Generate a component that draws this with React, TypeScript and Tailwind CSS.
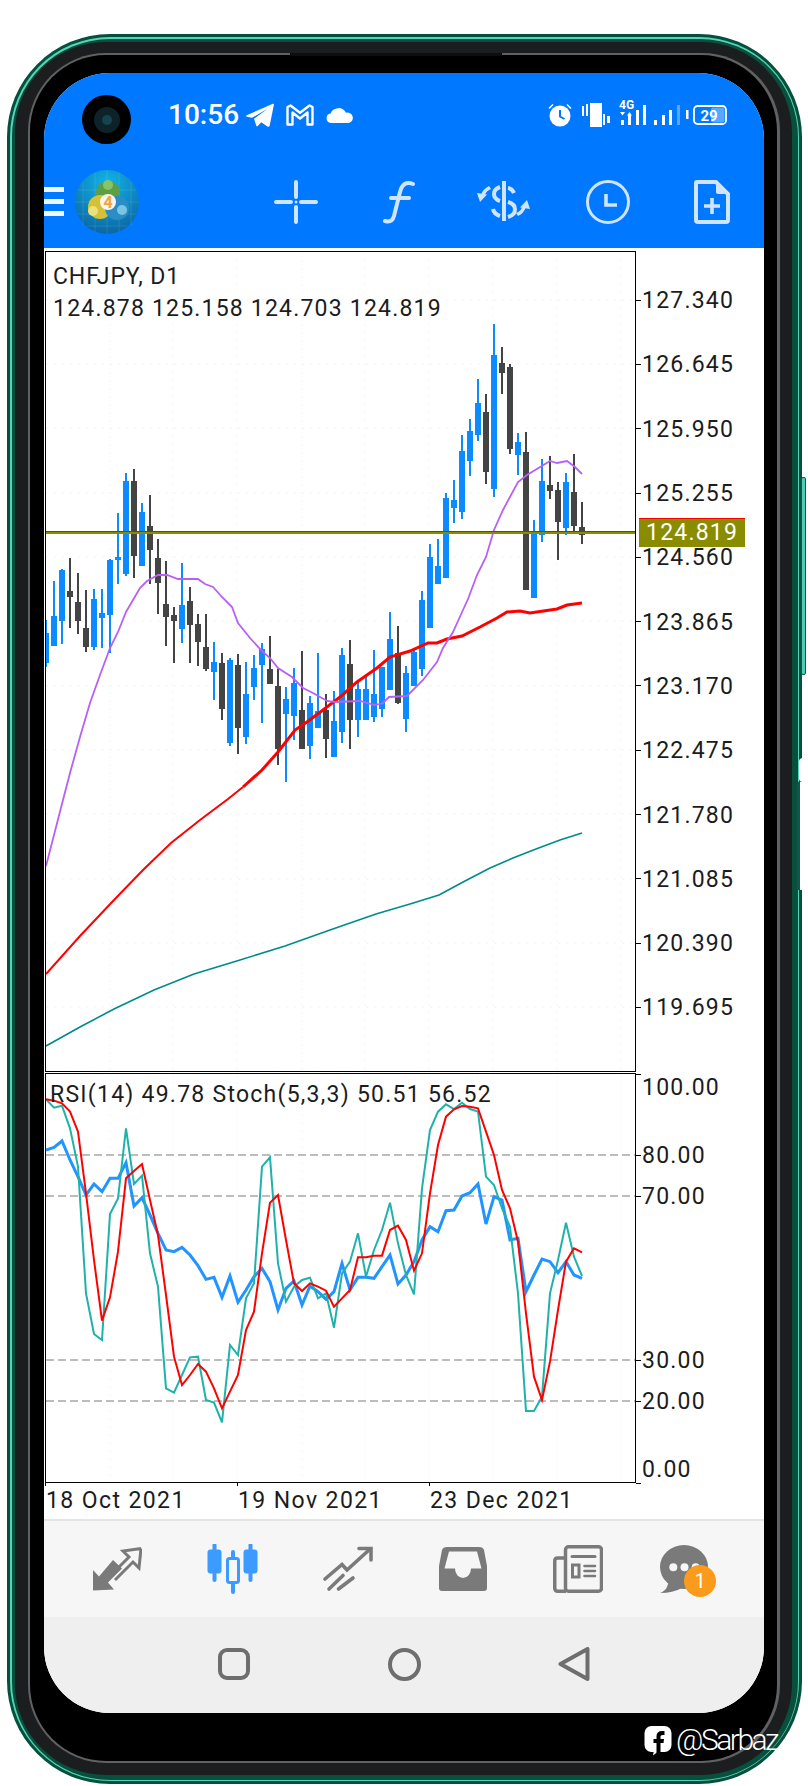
import { ReactNode } from "react";

// candles: high, low, body top, body bottom, up. x is 46 + 8 * index
const candles: number[][] = [
  [620, 667, 633, 663, 1], [581, 646, 616, 646, 1], [569, 644, 570, 621, 1], [558, 628, 591, 597, 0],
  [573, 634, 602, 621, 0], [590, 652, 628, 647, 0], [589, 650, 599, 647, 1], [589, 648, 613, 618, 1],
  [559, 653, 560, 615, 1], [513, 584, 557, 560, 1], [473, 576, 481, 574, 1], [469, 578, 481, 556, 0],
  [503, 566, 512, 566, 1], [495, 584, 526, 550, 0], [539, 614, 558, 583, 0], [561, 646, 604, 617, 0],
  [607, 663, 615, 621, 0], [563, 643, 605, 629, 1], [587, 663, 601, 625, 0], [614, 666, 624, 642, 0],
  [614, 671, 647, 669, 0], [642, 700, 662, 672, 1], [653, 720, 663, 709, 0], [658, 746, 660, 743, 1],
  [654, 754, 665, 728, 0], [662, 744, 694, 737, 1], [655, 700, 668, 687, 1], [643, 723, 649, 665, 1],
  [636, 684, 669, 684, 0], [669, 765, 686, 749, 0], [687, 782, 699, 714, 1], [668, 740, 683, 716, 1],
  [651, 749, 710, 749, 0], [696, 759, 703, 746, 1], [653, 728, 711, 728, 1], [694, 758, 710, 739, 0],
  [691, 757, 721, 757, 1], [648, 743, 655, 732, 1], [640, 749, 664, 720, 0], [680, 737, 689, 720, 1],
  [677, 720, 689, 720, 1], [650, 722, 694, 717, 1], [667, 717, 667, 709, 1], [612, 690, 639, 690, 1],
  [626, 704, 653, 703, 0], [666, 732, 673, 719, 1], [648, 686, 652, 686, 1], [591, 676, 600, 669, 1],
  [544, 628, 557, 628, 1], [539, 584, 566, 584, 1], [493, 578, 498, 578, 1], [480, 523, 500, 508, 1],
  [435, 519, 451, 512, 1], [419, 476, 431, 461, 1], [379, 441, 403, 435, 1], [394, 484, 412, 472, 0],
  [324, 497, 355, 489, 1], [347, 394, 363, 373, 0], [364, 454, 367, 449, 0], [433, 475, 442, 455, 1],
  [432, 590, 452, 590, 0], [520, 598, 532, 598, 1], [459, 542, 481, 535, 1], [456, 499, 485, 491, 0],
  [482, 560, 490, 522, 0], [473, 535, 482, 528, 1], [454, 531, 492, 526, 0], [502, 544, 527, 535, 0],
];

const purple = "46,866 63,800 70,773 80,737 90,703 100,675 110,648 118,632 126,612 140,588 147,581 158,575 167,575 178,579 198,579 205,584 213,587 222,597 232,607 238,623 250,638 262,651 270,658 278,668 292,677 303,688 313,693 327,701 335,702 360,701 375,705 383,703 389,697 407,696 423,680 437,662 443,648 453,632 463,610 468,599 477,575 486,557 494,530 503,510 518,482 527,475 550,461 557,463 567,461 575,467 582,474";
const redMaLeft = "46,974 80,936 114,900 143,870 171,843 200,820 228,799 243,787";
const redMa = "243,787 262,770 278,752 295,730 307,722 323,710 340,697 357,682 377,668 390,657 410,651 428,643 437,643 447,639 462,636 480,627 497,618 507,612 520,611 530,613 557,609 567,605 582,603";
const tealMa = "46,1046 80,1027 114,1009 154,990 194,974 240,960 285,946 330,930 376,914 410,904 439,895 465,881 490,868 513,858 536,849 560,840 582,833";

// rsi / stoch values read off the chart, 3x scale from y 1060
const rsi = [270, 262, 243, 300, 350, 405, 372, 395, 355, 355, 308, 438, 413, 465, 520, 570, 575, 562, 585, 617, 658, 652, 712, 648, 727, 690, 650, 625, 665, 750, 685, 663, 735, 678, 695, 718, 695, 610, 690, 652, 652, 655, 620, 585, 672, 645, 605, 540, 500, 515, 452, 450, 408, 398, 372, 492, 410, 420, 540, 535, 695, 645, 597, 605, 638, 605, 645, 655];
const stochMain = [118, 143, 137, 205, 320, 700, 822, 840, 462, 415, 205, 372, 347, 580, 680, 985, 998, 945, 892, 890, 1020, 1028, 1087, 855, 885, 715, 670, 320, 292, 610, 725, 680, 660, 653, 715, 700, 803, 640, 605, 520, 650, 570, 510, 428, 550, 645, 703, 385, 210, 155, 133, 147, 128, 147, 155, 350, 375, 445, 500, 700, 1053, 1053, 1010, 700, 600, 488, 590, 648];
const stochSignal = [118, 122, 130, 155, 215, 400, 600, 782, 712, 575, 355, 333, 312, 420, 525, 705, 890, 975, 945, 912, 935, 985, 1045, 995, 945, 810, 755, 580, 428, 405, 540, 670, 693, 670, 680, 692, 740, 715, 690, 592, 592, 587, 587, 510, 497, 540, 632, 580, 400, 255, 170, 148, 138, 140, 145, 215, 285, 390, 445, 545, 760, 950, 1020, 905, 750, 605, 565, 577];

const toPoints = (vals: number[]) => vals.map((v, i) => `${46 + 8 * i},${1060 + v / 3}`).join(" ");

const prices = ["127.340", "126.645", "125.950", "125.255", "124.560", "123.865", "123.170", "122.475", "121.780", "121.085", "120.390", "119.695"];
const gridX = [110, 173, 237, 302, 365, 429, 493, 557, 621];
const gridY = [300, 364, 428, 493, 557, 621, 686, 750, 814, 879, 943, 1007];

function PriceChart() {
  return (
    <svg viewBox="46 252 589 819" className="block w-[589px] h-[819px]">
      <g stroke="#f2f2f2" strokeDasharray="2 6">
        {gridX.map((x) => <line key={x} x1={x} x2={x} y1={252} y2={1071} />)}
        {gridY.map((y) => <line key={y} x1={46} x2={635} y1={y} y2={y} />)}
      </g>
      <g shapeRendering="crispEdges">
        {candles.map((c, i) => {
          const x = 46 + 8 * i;
          const fill = c[4] ? "#0c8bff" : "#444444";
          return (
            <g key={i} fill={fill}>
              <rect x={x - 1} y={c[0]} width={2} height={c[1] - c[0]} />
              <rect x={x - 3} y={c[2]} width={6} height={Math.max(c[3] - c[2], 3)} />
            </g>
          );
        })}
      </g>
      <polyline points={tealMa} fill="none" stroke="#008b8b" strokeWidth={1.6} />
      <polyline points={redMaLeft} fill="none" stroke="#ff0000" strokeWidth={2} />
      <polyline points={redMa} fill="none" stroke="#ff0000" strokeWidth={3} />
      <polyline points={purple} fill="none" stroke="#b860f6" strokeWidth={1.8} />
      <rect x={46} y={531} width={590} height={1} fill="#ff0000" shapeRendering="crispEdges" />
      <rect x={46} y={532} width={590} height={2} fill="#8a8c00" shapeRendering="crispEdges" />
    </svg>
  );
}

function RsiChart() {
  return (
    <svg viewBox="46 1074 589 408" className="block w-[589px] h-[408px]">
      <g stroke="#f4f4f4" strokeDasharray="2 6">
        {gridX.map((x) => <line key={x} x1={x} x2={x} y1={1074} y2={1482} />)}
      </g>
      <g stroke="#bdbdbd" strokeWidth={2} strokeDasharray="8 4">
        {[1155, 1196, 1360, 1401].map((y) => <line key={y} x1={46} x2={635} y1={y} y2={y} />)}
      </g>
      <polyline points={toPoints(rsi)} fill="none" stroke="#2094ff" strokeWidth={3} />
      <polyline points={toPoints(stochMain)} fill="none" stroke="#20b2aa" strokeWidth={2} />
      <polyline points={toPoints(stochSignal)} fill="none" stroke="#ff0000" strokeWidth={2} />
    </svg>
  );
}

function Logo() {
  return (
    <svg viewBox="0 0 64 64" className="w-16 h-16">
      <defs>
        <radialGradient id="mt" cx="50%" cy="20%" r="85%">
          <stop offset="0%" stopColor="#12b4e8" />
          <stop offset="100%" stopColor="#0a62a0" />
        </radialGradient>
      </defs>
      <circle cx="32" cy="32" r="32" fill="url(#mt)" />
      <g stroke="#ffffff" strokeOpacity="0.1">
        <path d="M8 12V56M20 3V62M32 0V64M44 3V62M56 12V56M3 20H61M0 32H64M3 44H61M12 56H52" />
      </g>
      <circle cx="33" cy="23" r="12" fill="#5f9f44" />
      <circle cx="33" cy="15" r="5" fill="#86c46a" />
      <circle cx="25" cy="37" r="12" fill="#d4c136" />
      <circle cx="18" cy="41" r="5" fill="#ece07c" />
      <circle cx="42" cy="38" r="12" fill="#2a8dc6" />
      <circle cx="47" cy="40" r="5" fill="#7cc4e6" />
      <circle cx="33" cy="32" r="8" fill="#f7f5ee" />
      <text x="33" y="38" textAnchor="middle" fontSize="16" fontWeight="700" fill="#f2a33c" fontFamily="Roboto, sans-serif">4</text>
    </svg>
  );
}

function Crosshair() {
  return (
    <svg viewBox="0 0 44 44" className="w-11 h-11" stroke="#cfe4ff" strokeWidth="4" strokeLinecap="round">
      <path d="M2 22H17M27 22H42M22 2V17M22 27V42" />
      <circle cx="22" cy="22" r="1.5" fill="#cfe4ff" stroke="none" />
    </svg>
  );
}

function FuncIcon() {
  return (
    <svg viewBox="0 0 34 44" className="w-[34px] h-11" fill="none" stroke="#cfe4ff" strokeWidth="4" strokeLinecap="round">
      <path d="M30 4Q20 0 17 12L11 36Q9 43 2 41" />
      <path d="M8 18H26" />
    </svg>
  );
}

function DollarArrows() {
  return (
    <svg viewBox="0 0 54 44" className="w-[54px] h-11" fill="none" stroke="#cfe4ff" strokeWidth="4">
      <path d="M27 1V41" />
      <path d="M23 7Q17 9 17 14Q17 19 23 21" />
      <path d="M31 8Q35 8.500 37 13" />
      <path d="M31 22Q38 24 38 29.500Q38 35 31 37" />
      <path d="M16 29Q17 34 23 36" />
      <g fill="#cfe4ff" stroke="none">
        <path d="M12 6Q6 9 4.500 14L8 15Q9 11 14 9Z" />
        <path d="M0 13L10 14.500L3 22Z" />
      </g>
      <g fill="#cfe4ff" stroke="none" transform="rotate(180 26.500 21)">
        <path d="M12 6Q6 9 4.500 14L8 15Q9 11 14 9Z" />
        <path d="M0 13L10 14.500L3 22Z" />
      </g>
    </svg>
  );
}

function ClockIcon() {
  return (
    <svg viewBox="0 0 44 44" className="w-11 h-11" fill="none" stroke="#cfe4ff">
      <circle cx="22" cy="22" r="20.500" strokeWidth="3" />
      <path d="M20 14V25H31" strokeWidth="3.600" />
    </svg>
  );
}

function NewOrderIcon() {
  return (
    <svg viewBox="0 0 36 44" className="w-9 h-11" fill="none" stroke="#cfe4ff">
      <path d="M3 2H22L34 14V40Q34 42 32 42H4Q2 42 2 40V3Q2 2 3 2Z" strokeWidth="4" />
      <path d="M22 0L36 14H24Q22 14 22 12Z" fill="#cfe4ff" stroke="none" />
      <path d="M10 26H26M18 18V34" strokeWidth="3.600" />
    </svg>
  );
}

function NetworkIcons() {
  return (
    <svg viewBox="0 -2 80 30" className="w-20 h-[30px]" fill="#ffffff">
      <text x="0" y="9" fontSize="12" fontWeight="700" fontFamily="Roboto, sans-serif" fill="#ffffff">4G</text>
      <path d="M1 12H6L3.500 15.500ZM8 15.500H13L10.500 12Z" />
      <rect x="2" y="20" width="3" height="5" />
      <rect x="9" y="15" width="3" height="10" />
      <rect x="17" y="10" width="3" height="15" />
      <rect x="24" y="5" width="3" height="20" />
      <rect x="35" y="20" width="3" height="5" />
      <rect x="43" y="15" width="3" height="10" />
      <rect x="50" y="10" width="3" height="15" />
      <rect x="58" y="5" width="3" height="20" fillOpacity="0.35" />
      <rect x="67" y="10" width="2.500" height="9" />
    </svg>
  );
}

function Battery() {
  return (
    <svg viewBox="0 0 34 20" className="w-[34px] h-5">
      <rect x="1" y="1" width="32" height="18" rx="3.500" fill="none" stroke="#ffffff" strokeWidth="1.800" />
      <rect x="18" y="2.500" width="13.500" height="15" rx="2" fill="#ffffff" fillOpacity="0.35" />
      <text x="16" y="15.500" textAnchor="middle" fontSize="15" fontWeight="700" fill="#ffffff" fontFamily="Roboto, sans-serif">29</text>
    </svg>
  );
}

function ExchangeIcon() {
  return (
    <svg viewBox="0 0 49 44" className="w-[49px] h-11" fill="none" stroke="#7a7a7a">
      <path d="M0 43.500V23L6 29.500L20 13L29 21.500L15 35.500L21 42.500Z" fill="#7a7a7a" stroke="none" />
      <path d="M48 1.500L30 4L36 10L26 20M48 1.500L46 21L40 15L22 33" strokeWidth="3" />
    </svg>
  );
}

function CandlesIcon() {
  return (
    <svg viewBox="0 0 51 50" className="w-[51px] h-[50px]" fill="#3d9bff" stroke="#3d9bff">
      <rect x="1" y="6" width="13" height="23" rx="2" />
      <path d="M7.500 1V36" strokeWidth="4" strokeLinecap="round" />
      <rect x="20.500" y="14.500" width="11" height="24" rx="2" fill="none" strokeWidth="3" />
      <path d="M26 8V14M26 39V48" strokeWidth="4" strokeLinecap="round" />
      <rect x="37" y="6" width="13" height="23" rx="2" />
      <path d="M43.500 1V36" strokeWidth="4" strokeLinecap="round" />
    </svg>
  );
}

function TrendIcon() {
  return (
    <svg viewBox="0 0 50 46" className="w-[50px] h-[46px]" fill="none" stroke="#7a7a7a" strokeWidth="3.600" strokeLinecap="round">
      <path d="M2 33L19 18.500L24 24L46 4" />
      <path d="M36 2.500H48V14" />
      <path d="M6 43L20 29.500M15.500 43L30 32" />
    </svg>
  );
}

function InboxIcon() {
  return (
    <svg viewBox="0 0 48 44" className="w-12 h-11">
      <path
        fill="#7a7a7a"
        fillRule="evenodd"
        d="M8 0H40Q44 0 45 3L48 19V41Q48 44 45 44H3Q0 44 0 41V19L3 3Q4 0 8 0ZM10 4.500H38L42.500 21.500H32A8 9.500 0 0 1 16 21.500H5.500Z"
      />
    </svg>
  );
}

function NewsIcon() {
  return (
    <svg viewBox="0 0 50 48" className="w-[50px] h-12" fill="none" stroke="#7a7a7a">
      <rect x="12.500" y="1.750" width="36" height="44.500" rx="3" strokeWidth="3.500" />
      <path d="M12 13H4.500Q1.750 13 1.750 16V43Q1.750 46.250 5 46.250H13" strokeWidth="3.500" />
      <path d="M19 11.500H42" strokeWidth="3" strokeLinecap="round" />
      <rect x="19.500" y="20" width="6.500" height="12" strokeWidth="3" />
      <path d="M31.500 21H42M31.500 26H42M31.500 31H42" strokeWidth="2.600" strokeLinecap="round" />
    </svg>
  );
}

function ChatIcon() {
  return (
    <svg viewBox="0 0 48 48" className="w-12 h-12" fill="#7a7a7a">
      <ellipse cx="24" cy="22" rx="24" ry="22" />
      <path d="M9 36L7 42Q5 46 0 48Q13 48 22 43Z" />
      <g fill="#f6f6f6">
        <circle cx="13.300" cy="22.300" r="4" />
        <circle cx="24.500" cy="22.300" r="4" />
        <circle cx="35.700" cy="22.300" r="4" />
      </g>
    </svg>
  );
}

function TelegramIcon() {
  return (
    <svg viewBox="0 0 28 24" className="w-7 h-6" fill="#ffffff">
      <path d="M.6 12.300L26.800.8Q28.200.2 27.900 1.700L23.700 22.500Q23.200 24.600 21 23.200L15.300 19.300L11.700 23Q10.700 23.900 10.200 22.500L8 15.800L22 5.500L6 14.800L1 13.800Q-.5 13.200.6 12.300Z" />
    </svg>
  );
}

function MailIcon() {
  return (
    <svg viewBox="0 0 28 22" className="w-7 h-[22px]" fill="none" stroke="#ffffff" strokeWidth="2.400" strokeLinejoin="round">
      <path d="M1.500 20.500V3L4.500 1.500L14 8.800L23.500 1.500L26.500 3V20.500H21.500V8.500L14 14.500L6.500 8.500V20.500Z" />
    </svg>
  );
}

function CloudIcon() {
  return (
    <svg viewBox="0 0 28 16" className="w-7 h-4" fill="#ffffff">
      <path d="M5 16A4.800 4.800 0 0 1 4.500 6.500A8.500 8.500 0 0 1 20 5.800A5.300 5.300 0 0 1 23 16Z" />
    </svg>
  );
}

function AlarmIcon() {
  return (
    <svg viewBox="0 0 24 24" className="w-6 h-6" fill="none" stroke="#ffffff">
      <path d="M1 5.500L5 1.500M23 5.500L19 1.500" strokeWidth="1.500" />
      <circle cx="12" cy="13" r="10.500" fill="#ffffff" stroke="none" />
      <path d="M12 7V13.500L16.500 16" stroke="#0078ff" strokeWidth="2" />
    </svg>
  );
}

function VibrateIcon() {
  return (
    <svg viewBox="0 0 28 24" className="w-7 h-6" fill="#ffffff">
      <rect x="0" y="3" width="2" height="10" />
      <rect x="4" y="1" width="2" height="12" />
      <rect x="8" y="0" width="12" height="24" />
      <rect x="21" y="11" width="2" height="11" />
      <rect x="25" y="13" width="3" height="7" />
    </svg>
  );
}

function AxisRow({ label, tick, className = "" }: { label: string; tick?: boolean; className?: string }) {
  return (
    <div className={`flex items-center h-6 ${className}`}>
      {tick ? <span className="w-[5px] h-px bg-black" /> : <span className="w-[5px]" />}
      <span className="ml-[1px]">{label}</span>
    </div>
  );
}

function DateCell({ label }: { label: string }) {
  return (
    <div className="w-[192px] flex flex-col">
      <span className="w-px h-[3px] bg-black" />
      <span className="ml-[1px] leading-[30px] tracking-[1.4px]">{label}</span>
    </div>
  );
}

function NavCell({ children }: { children: ReactNode }) {
  return <div className="flex items-center justify-center">{children}</div>;
}

export default function App() {
  return (
    <div className="relative w-[808px] h-[1786px] bg-white overflow-hidden pt-[34px] pl-[7px] font-['Roboto',sans-serif]">
      {/* side buttons */}
      <div className="absolute left-[801px] top-[477px] w-[5px] h-[198px] rounded-[2px] bg-[#4fcdb8] border border-[#0a5c47]" />
      <div className="absolute left-[799px] top-[758px] w-[5px] h-[24px] rounded-l-[4px] bg-white z-10" />
      <div className="absolute left-[797px] top-[782px] w-[3px] h-[108px] bg-[#14544a] z-10" />
      <div className="absolute left-[800px] top-[782px] w-[3px] h-[108px] bg-white z-10" />

      {/* phone body, rings from the outside in */}
      <div className="w-[795px] h-[1750px] rounded-[103px] bg-[#04503c] p-[3px]">
        <div className="w-full h-full rounded-[100px] bg-[#5ad2b6] p-[1.5px]">
          <div className="w-full h-full rounded-[98px] bg-[#07503d] pt-[3.500px] pl-[3.500px] pr-[5.500px] pb-[4.500px]">
            <div className="relative w-full h-full rounded-[91px] bg-[#1b1d1e] pt-[11px] pl-[13px] pr-[12px] pb-[12px]">
              <div className="absolute left-[275px] top-[11px] w-[212px] h-[3px] bg-[#0e0e0e] z-10" />
              <div className="w-full h-full rounded-[78px] bg-[#5f6163] pt-[2px] pl-[2px] pr-[3px] pb-[2px]">
                <div className="w-full h-full rounded-[76px] bg-black pt-[18px] pl-[14px] pr-[14px] pb-[48px]">
                  {/* screen */}
                  <div className="relative w-[720px] h-[1640px] rounded-[66px] overflow-hidden bg-white flex flex-col">
                    <header className="h-[175px] bg-[#0078ff] text-white shrink-0">
                      <div className="h-[82px] flex items-center pl-[124px] pr-[37px] pt-[1px]">
                        <span className="text-[28px] font-medium leading-none">10:56</span>
                        <span className="ml-[7px]"><TelegramIcon /></span>
                        <span className="ml-[12px]"><MailIcon /></span>
                        <span className="ml-[12px]"><CloudIcon /></span>
                        <div className="ml-auto flex items-center">
                          <AlarmIcon />
                          <span className="ml-[10px]"><VibrateIcon /></span>
                          <span className="ml-[9px] -mt-[4px]"><NetworkIcons /></span>
                          <span className="-ml-[6px]"><Battery /></span>
                        </div>
                      </div>
                      <div className="h-[93px] flex items-center">
                        <div className="w-5 flex flex-col gap-[7px]">
                          <span className="h-[5px] bg-[#eef5ff]" />
                          <span className="h-[5px] bg-[#eef5ff]" />
                          <span className="h-[5px] bg-[#eef5ff]" />
                        </div>
                        <span className="ml-[11px]"><Logo /></span>
                        <div className="ml-auto w-[520px] grid grid-cols-5">
                          <NavCell><Crosshair /></NavCell>
                          <NavCell><FuncIcon /></NavCell>
                          <NavCell><DollarArrows /></NavCell>
                          <NavCell><ClockIcon /></NavCell>
                          <NavCell><NewOrderIcon /></NavCell>
                        </div>
                      </div>
                    </header>

                    <main className="relative h-[1271px] shrink-0 pt-[3px] text-[23px] leading-6 tracking-[1.2px] text-[#1c1c1c]">
                      <div className="flex h-[821px]">
                        <div className="relative ml-px w-[591px] border border-black">
                          <PriceChart />
                          <div className="absolute left-[7px] top-[9px] leading-[32px]">
                            <div className="tracking-[0.9px]">CHFJPY, D1</div>
                            <div>124.878 125.158 124.703 124.819</div>
                          </div>
                        </div>
                        <div className="pt-[18px]">
                          {prices.map((p) => (
                            <div key={p} className="flex items-center h-[64.3px]">
                              <span className="w-[5px] h-px bg-black -mt-[2px]" />
                              <span className="ml-[1px]">{p}</span>
                            </div>
                          ))}
                        </div>
                      </div>

                      <div className="flex h-[410px] mt-px">
                        <div className="relative ml-px w-[591px] border border-black">
                          <RsiChart />
                          <div className="absolute left-[4px] top-[7px] leading-[28px] tracking-[1.25px]">RSI(14) 49.78 Stoch(5,3,3) 50.51 56.52</div>
                        </div>
                        <div className="flex flex-col pt-px">
                          <span className="w-[5px] h-px bg-black" />
                          <AxisRow label="100.00" className="mt-px" />
                          <AxisRow label="80.00" tick className="mt-[44px]" />
                          <AxisRow label="70.00" tick className="mt-[17px]" />
                          <AxisRow label="30.00" tick className="mt-[140px]" />
                          <AxisRow label="20.00" tick className="mt-[17px]" />
                          <AxisRow label="0.00" className="mt-[44px]" />
                          <span className="w-[5px] h-px bg-black mt-[1px]" />
                        </div>
                      </div>

                      <div className="flex ml-px">
                        <DateCell label="18 Oct 2021" />
                        <DateCell label="19 Nov 2021" />
                        <DateCell label="23 Dec 2021" />
                      </div>

                      {/* last price tag sits on top of the axis */}
                      <div className="absolute left-[595px] top-[270px] w-[106px] h-[29px] border-t border-[#ff0000] bg-[#8a8c00] text-white pl-[7px] leading-[28px]">
                        124.819
                      </div>
                    </main>

                    <nav className="h-[98px] shrink-0 border-t-2 border-[#e4e4e4] bg-[#f6f6f6] grid grid-cols-6 w-full pl-[16px] pr-[14px]">
                      <NavCell><ExchangeIcon /></NavCell>
                      <NavCell><CandlesIcon /></NavCell>
                      <NavCell><TrendIcon /></NavCell>
                      <NavCell><InboxIcon /></NavCell>
                      <NavCell><NewsIcon /></NavCell>
                      <div className="relative flex items-center justify-center -translate-x-[9px]">
                        <ChatIcon />
                        <span className="absolute left-[58px] top-[44px] w-8 h-8 rounded-full bg-[#fb9a1b] text-white text-[20px] leading-8 text-center">1</span>
                      </div>
                    </nav>

                    <div className="flex-1 bg-[#efefef] flex justify-center">
                      <div className="w-[510px] grid grid-cols-3 items-center pb-[2px]">
                        <NavCell><span className="block w-8 h-8 rounded-[9px] border-4 border-[#6e6e6e]" /></NavCell>
                        <NavCell><span className="block w-[33px] h-[33px] rounded-full border-4 border-[#6e6e6e]" /></NavCell>
                        <NavCell>
                          <svg viewBox="0 0 32 34" className="w-8 h-[34px]" fill="none" stroke="#6e6e6e" strokeWidth="4" strokeLinejoin="round">
                            <path d="M2.500 17L29.500 2V32Z" />
                          </svg>
                        </NavCell>
                      </div>
                    </div>

                    {/* camera punch hole */}
                    <div className="absolute left-[38px] top-[22px] w-[49px] h-[49px] rounded-full bg-black flex items-center justify-center">
                      <div className="w-[26px] h-[26px] rounded-full bg-[#0d2329] flex items-center justify-center">
                        <div className="w-[10px] h-[10px] rounded-full bg-[#14444e]" />
                      </div>
                    </div>
                  </div>
                </div>
              </div>
            </div>
          </div>
        </div>
      </div>

      {/* watermark */}
      <div className="absolute left-[644px] top-[1724px] flex items-center text-white z-20">
        <svg viewBox="0 0 28 31" className="w-7 h-[31px]">
          <rect x="0.500" y="1" width="27" height="26" rx="7" fill="#ffffff" />
          <path d="M10 25L9 30.500L16 25Z" fill="#ffffff" />
          <path d="M18 6Q12.500 6 12.500 11.500V14H9.500V18H12.500V28H16.500V18H19.500L20 14H16.500V11.500Q16.500 10 18.500 10H20.500V6Z" fill="#000000" />
        </svg>
        <span className="ml-[4px] text-[30px] font-light leading-8 tracking-[-2.500px]">@Sarbaz</span>
      </div>
    </div>
  );
}
